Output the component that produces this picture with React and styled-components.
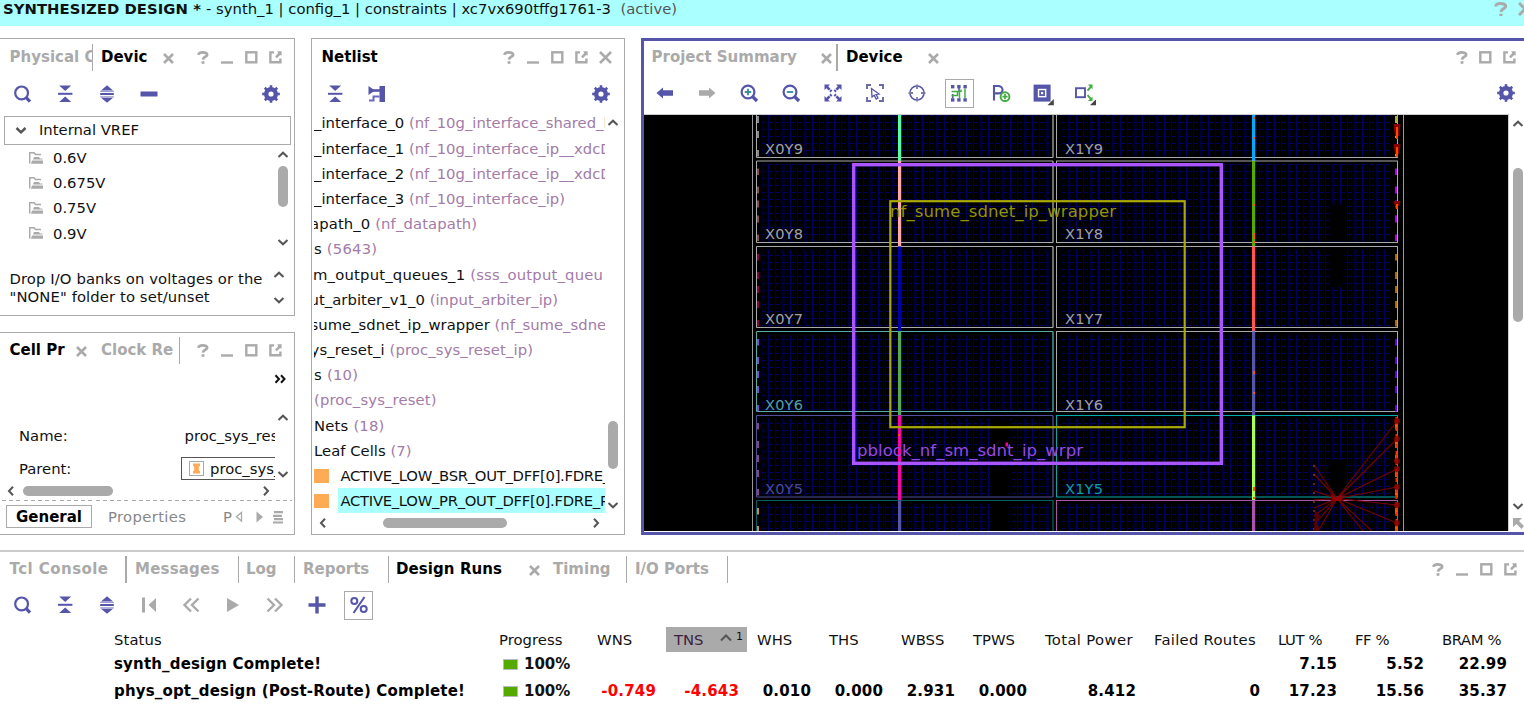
import React from "react";
import styled, { createGlobalStyle } from "styled-components";

const GRAY = "#aaaaaa";
const BLUE = "#5555aa";

const Global = createGlobalStyle`
  * { box-sizing: border-box; }
  html, body { margin: 0; background: #fff; overflow: hidden; }
  body { font-family: "DejaVu Sans", sans-serif; font-size: 14.8px; color: #111; white-space: pre; }
  svg { display: block; flex: none; }
`;

const Page = styled.div`
  width: 1524px; height: 709px; overflow: hidden;
  display: flex; flex-direction: column;
`;
const TitleBar = styled.header`
  height: 26px; padding: 0 0 8px 3px; flex: none; overflow: hidden;
  background: #aaffff; display: flex; align-items: center; line-height: 18px;
`;
const TitleText = styled.span`
  letter-spacing: ${(p) => p.$ls || 0}px; color: ${(p) => p.$c || "#111"};
  font-weight: ${(p) => (p.$b ? 700 : 400)};
  width: ${(p) => p.$w}px;
`;
const TitleControls = styled.div`
  margin-left: auto; margin-right: -8px; display: flex; gap: 10px; align-items: center;
`;
const Workspace = styled.div`
  height: 497px; margin-top: 12px; flex: none; display: flex; gap: 16px;
`;
const Side = styled.div`
  width: 295px; display: flex; flex-direction: column; gap: 16px; flex: none;
`;
const Panel = styled.section`
  display: flex; flex-direction: column; overflow: hidden; background: #fff; flex: none;
  border: 1px solid ${GRAY};
  border-left-width: ${(p) => (p.$open ? 0 : 1)}px;
  width: ${(p) => p.$w}px; height: ${(p) => p.$h}px;
`;
const DevicePanel = styled.section`
  flex: 1; border: 3px solid ${BLUE}; border-right: 0;
  display: flex; flex-direction: column; overflow: hidden; background: #fff;
`;
const TabRow = styled.div`
  display: flex; align-items: center; flex: none;
  height: ${(p) => p.$h || 36}px; padding-right: ${(p) => p.$pr || 0}px;
`;
const Tab = styled.div`
  font-weight: 700; font-size: 15px; height: 27px; line-height: 27px; flex: none; overflow: hidden;
  letter-spacing: ${(p) => p.$ls || 0}px;
  display: flex; align-items: center;
  color: ${(p) => (p.$on ? "#000" : GRAY)};
  width: ${(p) => p.$w}px; padding-left: ${(p) => p.$pl || 8}px;
  border-right: ${(p) => p.$line || 0}px solid ${GRAY};
`;
const TabLabel = styled.span`
  overflow: hidden; flex: none; width: ${(p) => p.$w}px;
`;
const Controls = styled.div`
  margin-left: auto; display: flex;
`;
const ControlSlot = styled.span`
  width: 24px; height: 24px; display: flex; align-items: center; justify-content: center;
`;
const Toolbar = styled.div`
  display: flex; align-items: center; height: 38px; flex: none;
  padding: 0 ${(p) => p.$pr || 0}px 0 ${(p) => p.$pl || 0}px;
`;
const ToolSlot = styled.span`
  width: 42px; height: 30px; display: flex; align-items: center; justify-content: center;
  margin-left: ${(p) => (p.$end ? "auto" : 0)};
  margin-right: ${(p) => p.$mr || 0}px;
`;
const ToolFrame = styled.span`
  width: 29px; height: 29px; border: 1px solid ${GRAY};
  display: flex; align-items: center; justify-content: center; flex: none;
`;
const Row = styled.div`
  display: flex; align-items: center; flex: none; overflow: hidden;
  height: ${(p) => p.$h}px; padding-left: ${(p) => p.$pl || 0}px;
`;
const Split = styled.div`
  display: flex; flex: none; height: ${(p) => p.$h}px;
`;
const SplitMain = styled.div`
  overflow: hidden; flex: none; width: ${(p) => p.$w}px;
  margin-left: ${(p) => p.$ml || 0}px; padding-top: ${(p) => p.$pt || 0}px;
`;
const NetTree = styled.div`
  margin-top: -2.6px;
`;
const VScroll = styled.div`
  width: 16px; display: flex; flex-direction: column; align-items: center;
  justify-content: space-between; flex: none; overflow: hidden;
  padding: ${(p) => p.$pad || "0"}; margin-left: ${(p) => p.$ml || 0}px;
`;
const VTrack = styled.div`
  flex: 1; padding-top: ${(p) => p.$top || 0}px;
`;
const VThumb = styled.div`
  width: 10px; height: ${(p) => p.$h}px; border-radius: 5px; background: ${GRAY};
`;
const HScroll = styled.div`
  display: flex; align-items: center; flex: none;
  height: ${(p) => p.$h}px; padding-left: ${(p) => p.$pl}px;
`;
const HThumb = styled.div`
  height: 10px; border-radius: 5px; background: ${GRAY};
  width: ${(p) => p.$w}px; margin: 0 ${(p) => p.$r}px 0 ${(p) => p.$l}px;
`;
const Combo = styled.div`
  height: 29px; width: 287px; margin-left: 4px; border: 1px solid ${GRAY}; flex: none;
  display: flex; align-items: center; padding: 0 0 2px 10px; gap: 12px; font-size: 14.8px;
`;
const Hint = styled.div`
  line-height: 18px; font-size: 14.8px; padding: 1px 0 0 9.5px; letter-spacing: 0.1px;
`;
const PropRow = styled.div`
  display: flex; align-items: center; height: ${(p) => p.$h}px; padding-left: 19px;
`;
const PropName = styled.span`
  width: ${(p) => p.$w}px; flex: none;
`;
const LinkBox = styled.div`
  height: 23px; width: 120px; flex: none; border: 1px solid #555;
  display: flex; align-items: center; padding-left: 7px; gap: 6px;
`;
const Dashes = styled.div`
  height: 1px; margin: 0 2px; flex: none;
  background: repeating-linear-gradient(90deg, #aaa 0 4px, #fff 4px 7.2px);
`;
const FootTabs = styled.div`
  display: flex; align-items: center; height: 31px; padding-left: 6px; color: #888;
`;
const FootTab = styled.div`
  height: 23px; width: 86px; border: 1px solid ${GRAY}; color: #000; font-weight: 700; font-size: 15px;
  display: flex; align-items: center; justify-content: center; margin-right: 16px;
`;
const FootLabel = styled.span`
  width: ${(p) => p.$w}px; overflow: hidden; letter-spacing: 0.35px;
`;
const Net = styled.div`
  height: 25.2px; line-height: 25.2px; display: flex; align-items: center;
  margin-left: ${(p) => p.$x || 0}px; letter-spacing: ${(p) => p.$ls || 0}px;
`;
const Type = styled.span`
  color: #a37ba8;
`;
const CellMark = styled.span`
  width: 15px; height: 14px; background: #ffaa55; flex: none; margin-right: 9px;
`;
const NetName = styled.span`
  height: 25px; flex: none; width: 290px; padding-left: 2.5px; letter-spacing: -0.3px;
  background: ${(p) => (p.$sel ? "#aaffff" : "transparent")};
`;
const Canvas = styled.div`
  width: 865px; flex: none; border-right: 1px solid #ccc; border-top: 1px solid #ccc; background: #000;
`;
const Bottom = styled.section`
  margin-top: 15px; border-top: 2px solid #ccc; flex: 1;
`;
const Grid = styled.div`
  display: grid; align-items: center; padding-left: 106px;
  height: ${(p) => p.$h}px;
  grid-template-columns: 385px 98px 77px 83px 72px 72px 72px 72px 109px 124px 77px 87px 83px;
`;
const HeadCell = styled.div`
  padding-left: 8px; height: 25px; line-height: 25px; letter-spacing: ${(p) => p.$ls || 0}px;
`;
const SortCell = styled.div`
  width: 81px; height: 25px; padding-left: 8px; background: ${GRAY}; color: #3c2140;
  display: flex; align-items: center;
`;
const SortOrder = styled.span`
  font-size: 11px; color: #111; margin: -6px 0 0 4px;
`;
const Cell = styled.div`
  padding: 0 10px 0 8px; font-weight: 700; font-size: 15px; letter-spacing: 0.17px; color: ${(p) => (p.$bad ? "#ff0000" : "#000")};
  text-align: ${(p) => (p.$left ? "left" : "right")};
`;
const Progress = styled.div`
  padding-left: 12px; font-weight: 700; font-size: 15px;
  display: flex; align-items: center; gap: 6px;
`;
const Swatch = styled.span`
  width: 15px; height: 11px; border: 1px solid #bbb; background: #55aa00; margin-top: 1px;
`;

const Svg = ({ w = 18, h = w, children, ...r }) => (
  <svg width={w} height={h} viewBox={`0 0 ${w} ${h}`} fill="none" {...r}>{children}</svg>
);
const Chevron = ({ dir = "up", w = 2 }) => {
  const d = {
    up: "M1.5 8 6 3.7 10.5 8", down: "M1.5 4 6 8.3 10.5 4",
    left: "M8 1.8 4 6 8 10.2", right: "M4 1.8 8 6 4 10.2",
  }[dir];
  return <Svg w={12} stroke="#555" strokeWidth={w}><path d={d} /></Svg>;
};
const Help = ({ k = 1 }) => (
  <svg width={12 * k} height={13 * k} viewBox="0 0 12 13" fill="none">
    <path d="M1.5 3.9C1.6 .5 10.2 .6 10.2 3.7 10.2 6 6.2 5.6 6 8.6" stroke={GRAY} strokeWidth="2.7" />
    <rect x="4.6" y="10.2" width="2.8" height="2.6" fill={GRAY} />
  </svg>
);
const Minimize = () => <Svg w={13}><rect x="0" y="10.3" width="12" height="2.4" fill={GRAY} /></Svg>;
const Maximize = () => <Svg w={13}><rect x="1.3" y="1.3" width="10" height="10" stroke={GRAY} strokeWidth="2.4" /></Svg>;
const Float = () => (
  <Svg w={13}>
    <path d="M5 1.4H1.4V11.2H11.4V7.6" stroke={GRAY} strokeWidth="2.4" />
    <path d="M8.2.2H12.6V4.8L11.2 4.1 7.8 7.3 6.1 5.6 9.2 2.3Z" fill={GRAY} />
  </Svg>
);
const Close = ({ s = 13, w = 2.6 }) => (
  <Svg w={s} stroke={GRAY} strokeWidth={w}><path d={`M1 1 ${s - 1} ${s - 1}M${s - 1} 1 1 ${s - 1}`} /></Svg>
);
const TabCloseWrap = styled.span`
  margin: 2px 0 0 ${(p) => p.$l}px; flex: none;
`;
const TabClose = ({ l }) => <TabCloseWrap $l={l}><Close s={11} w={2.6} /></TabCloseWrap>;

const Search = () => (
  <Svg w={19}><circle cx="8.6" cy="7.9" r="6.4" stroke={BLUE} strokeWidth="2.2" /><path d="M13 12.4 17 16.6" stroke={BLUE} strokeWidth="3.2" /></Svg>
);
const Collapse = () => (
  <Svg w={18} fill={BLUE}><path d="M3.2 .6H15.2L9.2 6Z" /><path d="M2 7.8H16.4V9.8H2Z" /><path d="M9.2 11.6 15.2 17H3.2Z" /></Svg>
);
const Expand = () => (
  <Svg w={18} fill={BLUE}><path d="M9 .2 15 5.4H3Z" /><rect x="2.2" y="8" width="13.6" height="2" /><path d="M2.2 6.4H15.8M2.2 11.8H15.8" stroke="#9a9acb" strokeWidth="1.2" /><path d="M3 12.8H15L9 17.8Z" /></Svg>
);
const Dash = () => <Svg w={18}><rect x=".5" y="6.5" width="17" height="5" fill={BLUE} /></Svg>;
const Gear = () => (
  <Svg w={18}>
    <circle cx="9" cy="9" r="4.8" stroke={BLUE} strokeWidth="4.4" />
    {[0, 45, 90, 135, 180, 225, 270, 315].map((a) => (
      <rect key={a} x="7.7" y=".2" width="2.6" height="3.4" fill={BLUE} transform={`rotate(${a} 9 9)`} />
    ))}
  </Svg>
);
const Schematic = () => (
  <Svg w={18}>
    <path d="M0.5 1 7 5.5 0.5 10Z" fill={BLUE} />
    <path d="M5 5.5H12" stroke={BLUE} strokeWidth="2.6" />
    <path d="M1 15.6H5.5V11.6H11.5" stroke="#6a6ac0" strokeWidth="2" />
    <rect x="11.5" y="1" width="5.5" height="16" fill={BLUE} />
  </Svg>
);
const Arrow = ({ c, flip }) => (
  <Svg w={18} transform={flip ? "scale(-1 1)" : undefined}><path d="M0.5 9 7 3.6V6.2H17V11.8H7V14.4Z" fill={c} /></Svg>
);
const Zoom = ({ plus }) => (
  <Svg w={19}>
    <circle cx="8" cy="8" r="6.4" stroke={BLUE} strokeWidth="2.2" />
    <path d="M12.6 12.6 17 17" stroke={BLUE} strokeWidth="3.4" />
    <path d={plus ? "M4.8 8H11.2M8 4.8V11.2" : "M4.8 8H11.2"} stroke="#3a8f9c" strokeWidth="1.9" />
  </Svg>
);
const Fit = () => (
  <Svg w={18}>
    <path d="M2.5 2.5 7.5 7.5M15.5 2.5 10.5 7.5M2.5 15.5 7.5 10.5M15.5 15.5 10.5 10.5" stroke={BLUE} strokeWidth="2.6" strokeDasharray="4.4 .8" />
    <path d="M.5 .5H6L.5 6ZM17.5 .5H12L17.5 6ZM.5 17.5H6L.5 12ZM17.5 17.5H12L17.5 12Z" fill={BLUE} />
  </Svg>
);
const SelectArea = () => (
  <Svg w={18}>
    <path d="M1 5V1H5M13 1H17V5M17 13V17H13M5 17H1V13" stroke="#6a6aa8" strokeWidth="1.9" />
    <path d="M5.5 4.5 6 13 8.2 11.2 10.2 15 12 14 10 10.4 13 10Z" stroke={BLUE} strokeWidth="1.3" />
  </Svg>
);
const Target = () => (
  <Svg w={18}><circle cx="9" cy="9" r="7" stroke={BLUE} strokeWidth="1.6" /><path d="M9 .5V5M9 13V17.5M.5 9H5M13 9H17.5" stroke="#7c7ca0" strokeWidth="1.8" /></Svg>
);
const Routing = () => (
  <Svg w={18}>
    {[1, 7.2, 13.4].map((x) => [1, 14.2].map((y) => (
      <rect key={x + "-" + y} x={x} y={y} width="3.4" height="3.4" fill={BLUE} />
    )))}
    <path d="M2.7 10V14M9 4V7" stroke={BLUE} strokeWidth="1.6" />
    <path d="M1.5 7.5H9.5V14M1.5 11.5H7.5V8M15 4.5V14M11 5.5V8" stroke="#44aa44" strokeWidth="1.5" />
  </Svg>
);
const PAdd = () => (
  <Svg w={19}>
    <path d="M2 16.5V2H6C12 2 12 9.4 6 9.4H2" stroke={BLUE} strokeWidth="2.1" />
    <circle cx="13" cy="12.7" r="4.4" fill="#fff" stroke="#44aa44" strokeWidth="2" />
    <path d="M10.4 12.7H15.6M13 10.1V15.3" stroke="#44aa44" strokeWidth="1.7" />
  </Svg>
);
const Corner = () => <path d="M21.8 16V22.3H15.5Z" fill="#444" />;
const Block = () => (
  <Svg w={22} h={26}>
    <g transform="translate(1.5 3.5)">
      <rect x="2.2" y="3.2" width="12.8" height="12.8" stroke={BLUE} strokeWidth="4.2" />
      <rect x="6.6" y="7.6" width="4" height="4" stroke={BLUE} strokeWidth="1.7" />
    </g>
    <g transform="translate(0 3)"><Corner /></g>
  </Svg>
);
const Fan = () => (
  <Svg w={22} h={26}>
    <g transform="translate(0.5 3)">
      <rect x="1.5" y="5.2" width="9" height="9" stroke={BLUE} strokeWidth="1.9" />
      <path d="M13 7.6 16.2 4M13 12.2 16.2 15.6" stroke="#44aa44" strokeWidth="1.9" />
      <path d="M18 1.6V6.2L13.4 1.6ZM18 18V13.4L13.4 18Z" fill="#44aa44" /><Corner />
    </g>
  </Svg>
);
const Folder = () => (
  <Svg w={14} h={12}>
    <path d="M0.7 11.5V0.7H5L6.5 2.4H12" stroke={GRAY} strokeWidth="1.5" />
    <path d="M5 5H10L11 6.5H13.5V7.4H4ZM3 8.6H14V11.8H2Z" fill={GRAY} />
  </Svg>
);
const InstIcon = () => (
  <Svg w={15}><rect x=".5" y=".5" width="14" height="14" stroke={GRAY} /><path d="M4 2.5H11V5L9.8 5.4V9.6L11 10V12.5H4V10L5.2 9.6V5.4L4 5Z" fill="#ffaa55" /></Svg>
);

const Win = ({ min, close }) => (
  <Controls>
    <ControlSlot><Help /></ControlSlot>
    {min && <ControlSlot><Minimize /></ControlSlot>}
    <ControlSlot><Maximize /></ControlSlot>
    <ControlSlot><Float /></ControlSlot>
    {close && <ControlSlot><Close s={13} w={2.5} /></ControlSlot>}
  </Controls>
);
const Tools = ({ items, gear, gearShift, ...r }) => (
  <Toolbar {...r}>
    {items.map((it, i) => <ToolSlot key={i}>{it}</ToolSlot>)}
    {gear && <ToolSlot $end $mr={gearShift}><Gear /></ToolSlot>}
  </Toolbar>
);

const NETS = [
  [0, "_interface_0", "(nf_10g_interface_shared_l", 0],
  [0, "_interface_1", "(nf_10g_interface_ip__xdcDu", 0],
  [0, "_interface_2", "(nf_10g_interface_ip__xdcDu", 0],
  [0, "_interface_3", "(nf_10g_interface_ip)", 0],
  [-4, "apath_0", "(nf_datapath)", 0.12],
  [0, "s", "(5643)", 0.2],
  [-1, "m_output_queues_1", "(sss_output_queu", 0.2],
  [-4.5, "ut_arbiter_v1_0", "(input_arbiter_ip)", 0.05],
  [-3.5, "sume_sdnet_ip_wrapper", "(nf_sume_sdnet", 0.02],
  [-3.5, "ys_reset_i", "(proc_sys_reset_ip)", 0.13],
  [0, "s", "(10)", 0.25],
  [0, "", "(proc_sys_reset)", 0.15],
  [0, "Nets", "(18)", 0.2],
  [0, "Leaf Cells", "(7)", 0.03],
];

const ROWS = [
  { n: 9, t: 76.5, b: 157.5, l: "#aaa", r: "#aaa", bl: "#55ffaa", br: "#00aaff", dl: "#aaa", dr: "#aaaa55" },
  { n: 8, t: 161, b: 242.5, l: "#aaa", r: "#aaa", bl: "#ffaaaa", br: "#55aa00", dl: "#a65f5a", dr: "#aa00ff" },
  { n: 7, t: 246.5, b: 327.5, l: "#aaa", r: "#aaa", bl: "#0000aa", br: "#ff5555", dl: "#aa0055", dr: "#aa6611" },
  { n: 6, t: 331.5, b: 411.5, l: "#55aaaa", r: "#aaa", bl: "#55aa55", br: "#5555aa", dl: "#aa55ff", dr: "#5500ff" },
  { n: 5, t: 415.5, b: 497, l: "#4f4f9c", r: "#00aaaa", bl: "#ff00aa", br: "#aaff55", dl: "#aa55aa", dr: "#ff5500" },
  { n: 4, t: 500.5, b: 585, l: "#006060", r: "#aa55aa", bl: "#5555aa", br: "#aa55aa", dl: "#ffaa55", dr: "#ff5500" },
];
const DOTS = [[1253, 117, 2], [1253, 137, 2], [1253, 204, 2], [1253, 233, 6], [1253, 241, 2], [1253, 307, 2], [1253, 371, 3], [1253, 392, 2], [1253, 487, 4], [1253, 497, 2], [898, 434, 2]];
const RAYS = [[1397, 421], [1397, 439], [1397, 469], [1397, 487], [1397, 505], [1397, 523], [1363, 531], [1374, 533], [1314, 465], [1314, 474], [1314, 491], [1314, 500], [1314, 508], [1314, 516], [1314, 525], [1317, 533]];

const Device = () => (
  <svg width="864" height="416" viewBox="644 115 864 416" fill="none">
    <defs>
      <pattern id="fabric" x="760" y="161" width="22" height="7" patternUnits="userSpaceOnUse">
        <path d="M0.5 0V7M15.5 0V7" stroke="#000038" />
        <path d="M2.5 0V7M13.5 0V7" stroke="#00001c" />
        <path d="M8.5 0V7" stroke="#000060" />
        <path d="M0 3.5H6M7 3.5H13M15 3.5H20" stroke="#00005c" />
      </pattern>
    </defs>
    <rect x="644" y="115" width="864" height="416" fill="#000" />
    {ROWS.map((r) => (
      <g key={r.n}>
        <rect x="762" y={r.t + 3} width="287" height={r.b - r.t - 4} fill="url(#fabric)" />
        <rect x="1062" y={r.t + 3} width="328" height={r.b - r.t - 4} fill="url(#fabric)" />
      </g>
    ))}
    <path d="M989 420h22v40h-22zM990 466h22v66h-22zM1331 205h14v36h-14zM1332 247h12v40h-12zM1331 460h14v36h-14z" fill="#000" />
    <path d="M752.5 114V531M1403.5 114V531" stroke="#999" />
    {ROWS.map((r) => (
      <g key={r.n}>
        <path d={`M756.5 ${r.b}V${r.t}H1053M756.5 ${r.b}H1053`} stroke={r.l} />
        <path d={`M1053 ${r.t}V${r.b}`} stroke={r.l} strokeWidth="2" opacity=".65" />
        <rect x="1056.5" y={r.t} width="341" height={r.b - r.t} stroke={r.r} />
        <path d={`M758 ${r.t + 7.5}V${r.b}`} stroke={r.dl} strokeWidth="2" strokeDasharray="6.5 11.5 7 7 7 8 7 12" opacity=".8" />
        <path d={`M1396 ${r.t + 7.5}V${r.b}`} stroke={r.dr} strokeWidth="2" strokeDasharray="6.5 11.5 7 7 7 8 7 12" />
        <rect x="898" y={r.t} width="3.2" height="85" fill={r.bl} />
        <rect x="1252" y={r.t} width="3.2" height="85" fill={r.br} />
      </g>
    ))}
    {DOTS.map(([x, y, h]) => <rect key={x + "-" + y} x={x} y={y} width="2" height={h} fill="#ff5500" />)}
    <rect x="1005.5" y="442.5" width="2.5" height="4" fill="#ff0088" />
    {RAYS.map(([x, y]) => <path key={x + "-" + y} d={`M1337 498.5L${x} ${y}`} stroke="#770000" strokeWidth="1.1" />)}
    <path d="M1330 493l6 5 8-6-4 6 6-3-6 6h-7z" fill="#990000" />
    <path d="M1314 465V531" stroke="#aa6600" strokeDasharray="2 7" />
    <path d="M1315 510l5 6-3 6 3 9h-6z" fill="#550000" />
    <path d="M1396.5 417V531" stroke="#ee3300" strokeWidth="2" strokeDasharray="8 2 4 3" />
    {[421, 439, 461, 469, 487, 505, 523].map((y) => <circle key={y} cx="1397" cy={y} r="3" fill="#880000" fillOpacity=".85" />)}
    {[[127, 12], [147, 10], [204, 5]].map(([y, h]) => (
      <g key={y}><path d={`M1393.5 ${y - 3}h7l-1.5 ${h}h-4z`} fill="#880000" /><path d={`M1397 ${y}v${h}`} stroke="#ff4400" strokeWidth="2" /></g>
    ))}
    <g fontFamily="DejaVu Sans, sans-serif" fontSize="14.6">
      {ROWS.slice(0, 5).map((r, i) => {
        const y = [154, 239, 324, 409.5, 493.5][i];
        return (
          <g key={r.n} opacity=".95">
            <text x="765" y={y} fill={r.l} textLength="38">{`X0Y${r.n}`}</text>
            <text x="1065" y={y} fill={r.r} textLength="38">{`X1Y${r.n}`}</text>
          </g>
        );
      })}
    </g>
    <rect x="853.7" y="164.7" width="367.6" height="298.6" stroke="#aa55ff" strokeWidth="3.4" />
    <rect x="890.3" y="201.2" width="294.4" height="226" stroke="#aaaa00" strokeWidth="2.2" />
    <g fontFamily="DejaVu Sans, sans-serif" fontSize="16.5">
      <text x="890" y="216.5" fill="#949400" textLength="226">nf_sume_sdnet_ip_wrapper</text>
      <text x="857" y="456" fill="#964be0" textLength="226">pblock_nf_sm_sdnt_ip_wrpr</text>
    </g>
  </svg>
);

const METRICS = [["WHS"], ["THS"], ["WBSS"], ["TPWS"], ["Total Power", 0.35], ["Failed Routes", 0.28], ["LUT %", -0.4], ["FF %", -0.4], ["BRAM %", -0.4]];
const RUNS = [
  { h: 24, s: "synth_design Complete!", v: ["", "", "", "", "", "", "", "", "7.15", "5.52", "22.99"] },
  { h: 29, s: "phys_opt_design (Post-Route) Complete!", v: ["-0.749", "-4.643", "0.010", "0.000", "2.931", "0.000", "8.412", "0", "17.23", "15.56", "35.37"] },
];

export default function App() {
  return (
    <Page>
      <Global />
      <TitleBar>
        <TitleText $b $w={203} $ls={0.06}>SYNTHESIZED DESIGN *</TitleText>
        <TitleText $w={414.5} $ls={0}>{"- synth_1 | config_1 | constraints | xc7vx690tffg1761-3"}</TitleText>
        <TitleText $c="#555" $w={70}>(active)</TitleText>
        <TitleControls><Help k={1.15} /><Close s={14} w={3} /></TitleControls>
      </TitleBar>

      <Workspace>
        <Side>
          <Panel $open $w={295} $h={278}>
            <TabRow $pr={7}>
              <Tab $w={93} $pl={9.5} $line={1}>Physical Co</Tab>
              <Tab $on $w={90}><TabLabel $w={45.5}>Devic</TabLabel><TabClose l={16} /></Tab>
              <Win min />
            </TabRow>
            <Tools $pl={1.5} $pr={2} gear items={[<Search />, <Collapse />, <Expand />, <Dash />]} />
            <Row $h={3} />
            <Combo><Chevron dir="down" w={2.5} />Internal VREF</Combo>
            <Split $h={105}>
              <SplitMain $w={275} $ml={0}>
                {["0.6V", "0.675V", "0.75V", "0.9V"].map((v) => (
                  <Row key={v} $h={25.2} $pl={29}><PropName $w={24}><Folder /></PropName>{v}</Row>
                ))}
              </SplitMain>
              <VScroll $pad="4px 0 2px">
                <Chevron /><VTrack $top={5}><VThumb $h={41} /></VTrack><Chevron dir="down" />
              </VScroll>
            </Split>
            <Row $h={19} />
            <Split $h={42}>
              <SplitMain $w={271}><Hint>{"Drop I/O banks on voltages or the\n\"NONE\" folder to set/unset"}</Hint></SplitMain>
              <VScroll $pad="0 0 5px"><Chevron /><Chevron dir="down" /></VScroll>
            </Split>
          </Panel>

          <Panel $open $w={295} $h={203}>
            <TabRow $h={35} $pr={7}>
              <Tab $on $w={93} $pl={9.5}><TabLabel $w={57}>Cell Pr</TabLabel><TabClose l={9.5} /></Tab>
              <Tab $w={87} $line={1}><TabLabel $w={73}>Clock Re</TabLabel></Tab>
              <Win min />
            </TabRow>
            <Row $h={22} $pl={274}>
              <Svg w={13} h={10} stroke="#111" strokeWidth="2"><path d="M1.5 1.2 5 5 1.5 8.8M7 1.2 10.5 5 7 8.8" /></Svg>
            </Row>
            <Row $h={19} />
            <Split $h={72}>
              <SplitMain $w={275} $pt={9.5}>
                <PropRow $h={33}><PropName $w={165.5}>Name:</PropName>proc_sys_reset_i</PropRow>
                <PropRow $h={33}><PropName $w={162}>Parent:</PropName><LinkBox><InstIcon />proc_sys_reset</LinkBox></PropRow>
              </SplitMain>
              <VScroll $pad="3px 0 1px"><Chevron /><Chevron dir="down" /></VScroll>
            </Split>
            <HScroll $h={19} $pl={5}><Chevron dir="left" /><HThumb $w={90} $l={6} $r={147} /><Chevron dir="right" /></HScroll>
            <Dashes />
            <FootTabs>
              <FootTab>General</FootTab>
              <FootLabel $w={115}>Properties</FootLabel>
              <FootLabel $w={12}>P</FootLabel>
              <Svg w={50} h={14}>
                <path d="M6.5 2.5V11L1.5 6.8Z" stroke={GRAY} strokeWidth="1.3" />
                <path d="M21.5 1.5 28 7 21.5 12.5Z" fill={GRAY} />
                <path d="M39 2.2H48M38 5.8H47M39 9.2H48M38 12.5H48" stroke={GRAY} strokeWidth="2.2" />
              </Svg>
            </FootTabs>
          </Panel>
        </Side>

        <Panel $w={314} $h={497}>
          <TabRow $pr={7}>
            <Tab $on $w={90} $pl={9.5}>Netlist</Tab>
            <Win min close />
          </TabRow>
          <Tools $pl={2} $pr={2} gear items={[<Collapse />, <Schematic />]} />
          <Split $h={401}>
            <SplitMain $w={291} $ml={2} $pt={0.01}>
              <NetTree>
                {NETS.map(([x, a, b, ls], i) => (
                  <Net key={i} $x={x} $ls={ls}>{a}{a && " "}<Type>{b}</Type></Net>
                ))}
                <Net><CellMark /><NetName>ACTIVE_LOW_BSR_OUT_DFF[0].FDRE_I</NetName></Net>
                <Net><CellMark /><NetName $sel>ACTIVE_LOW_PR_OUT_DFF[0].FDRE_PE</NetName></Net>
              </NetTree>
            </SplitMain>
            <VScroll $pad="4px 0 3px"><Chevron /><VTrack $top={292}><VThumb $h={48} /></VTrack><Chevron dir="down" /></VScroll>
          </Split>
          <HScroll $h={18} $pl={5}><Chevron dir="left" /><HThumb $w={124} $l={54} $r={83} /><Chevron dir="right" /></HScroll>
        </Panel>

        <DevicePanel>
          <TabRow $h={33} $pr={2.5}>
            <Tab $w={194} $pl={7.5} $line={2}><TabLabel $w={147}>Project Summary</TabLabel><TabClose l={22.5} /></Tab>
            <Tab $on $w={120}><TabLabel $w={58}>Device</TabLabel><TabClose l={24} /></Tab>
            <Win />
          </TabRow>
          <Tools gear gearShift={-3} items={[
            <Arrow c={BLUE} />, <Arrow c={GRAY} flip />, <Zoom plus />, <Zoom />, <Fit />, <SelectArea />, <Target />,
            <ToolFrame><Routing /></ToolFrame>, <PAdd />, <Block />, <Fan />,
          ]} />
          <Row $h={2} />
          <Split $h={417}>
            <Canvas><Device /></Canvas>
            <VScroll $ml={1} $pad="4px 0 1px">
              <Chevron /><VTrack $top={38}><VThumb $h={154} /></VTrack><Chevron dir="down" />
              <Svg w={12} h={18}><path d="M1 6H10L7 9 12 14 9.5 17 4.5 12 1 15Z" fill={GRAY} /></Svg>
            </VScroll>
          </Split>
        </DevicePanel>
      </Workspace>

      <Bottom>
        <TabRow $h={34} $pr={2}>
          <Tab $w={127} $pl={9.5} $line={2} $ls={0.45}>Tcl Console</Tab>
          <Tab $w={112} $line={1} $ls={0.2}>Messages</Tab>
          <Tab $w={56} $pl={7} $line={1}>Log</Tab>
          <Tab $w={94} $line={1}>Reports</Tab>
          <Tab $on $w={155} $pl={7} $ls={0.08}><TabLabel $w={109}>Design Runs</TabLabel><TabClose l={24} /></Tab>
          <Tab $w={83} $pl={9} $line={1}>Timing</Tab>
          <Tab $w={101} $line={1}>I/O Ports</Tab>
          <Win min />
        </TabRow>
        <Tools $pl={1.5} items={[
          <Search />, <Collapse />, <Expand />,
          <Svg w={18} fill={GRAY}><path d="M2 1.5H5V16.5H2ZM16 2V16L8.5 9Z" /></Svg>,
          <Svg w={18} stroke={GRAY} strokeWidth="2.4"><path d="M9 2.5 2.5 9 9 15.5M16.5 2.5 10 9 16.5 15.5" /></Svg>,
          <Svg w={18} fill={GRAY}><path d="M3 2 15 9 3 16Z" /></Svg>,
          <Svg w={18} stroke={GRAY} strokeWidth="2.4"><path d="M1.5 2.5 8 9 1.5 15.5M9 2.5 15.5 9 9 15.5" /></Svg>,
          <Svg w={18} stroke={BLUE} strokeWidth="3.4"><path d="M9 .5V17.5M.5 9H17.5" /></Svg>,
          <ToolFrame><Svg w={18} stroke={BLUE} strokeWidth="2"><circle cx="4.3" cy="5" r="3" /><circle cx="13.7" cy="13" r="3" /><path d="M14.5 1 3.5 17" /></Svg></ToolFrame>,
        ]} />
        <Row $h={3} />
        <Grid $h={25}>
          <HeadCell $ls={0.1}>Status</HeadCell><HeadCell $ls={0.05}>Progress</HeadCell><HeadCell>WNS</HeadCell>
          <SortCell><span>TNS</span><PropName $w={16.5} /><Svg w={12} h={14} stroke="#555" strokeWidth="2"><path d="M1 7.5 6 2.5 11 7.5" /></Svg><SortOrder>1</SortOrder></SortCell>
          {METRICS.map(([t, ls]) => <HeadCell key={t} $ls={ls}>{t}</HeadCell>)}
        </Grid>
        {RUNS.map((r) => (
          <Grid key={r.s} $h={r.h}>
            <Cell $left>{r.s}</Cell>
            <Progress><Swatch />100%</Progress>
            {r.v.map((v, i) => <Cell key={i} $bad={v[0] === "-"}>{v}</Cell>)}
          </Grid>
        ))}
      </Bottom>
    </Page>
  );
}
